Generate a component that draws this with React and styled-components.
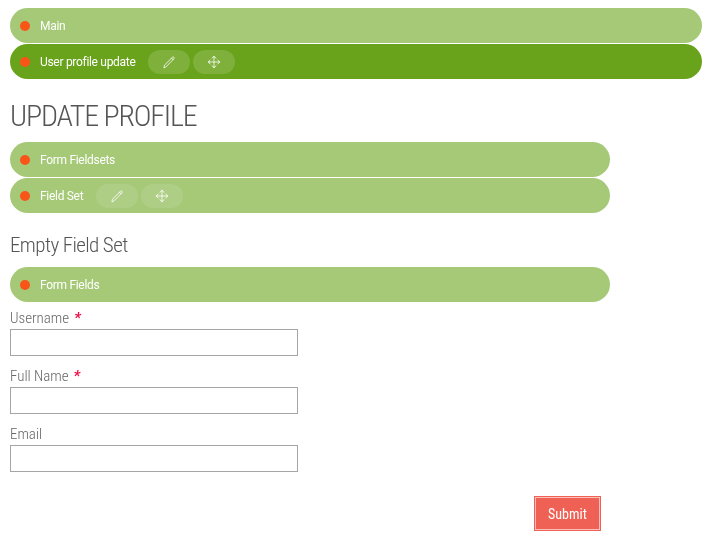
import React from "react";
import styled, { createGlobalStyle } from "styled-components";

const Global = createGlobalStyle`
  *, *::before, *::after { box-sizing: border-box; }
  body {
    margin: 0;
    background: #fff;
    color: #555;
    font-family: "Roboto Condensed", Roboto, sans-serif;
    font-stretch: 75%;
    font-weight: 300;
  }
`;

const Page = styled.main`
  width: 711px;
  height: 544px;
  padding: 8px 9px 0 10px;
  overflow: hidden;
  will-change: transform;
`;

const BarStack = styled.div`
  display: flex;
  flex-direction: column;
  gap: 1px;
`;

const EditBar = styled.div`
  display: flex;
  align-items: center;
  height: 35px;
  padding-left: 10px;
  border-radius: 17.5px;
  background: ${(p) => (p.$active ? "#69a31b" : "#a6c978")};
  color: #fff;
`;

const Dot = styled.span`
  width: 10px;
  height: 10px;
  margin: 1px 10px 0 0;
  border-radius: 50%;
  background: #fa5519;
`;

const BarLabel = styled.span`
  width: ${(p) => p.$width}px;
  font: 400 12px/16px Roboto, sans-serif;
  font-stretch: 100%;
  letter-spacing: -0.3px;
  white-space: nowrap;
`;

const Tools = styled.div`
  display: flex;
  gap: 3px;
  margin: 1px 0 0 13px;
`;

const ToolButton = styled.button`
  display: grid;
  place-items: center;
  width: 42px;
  height: 24px;
  padding: 0;
  border: 0;
  border-radius: 12px;
  background: rgba(255, 255, 255, ${(p) => (p.$active ? 0.14 : 0.1)});
  color: rgba(255, 255, 255, 0.9);
`;

const Icon = styled.svg`
  display: block;
  width: 14px;
  height: 14px;
  fill: none;
  stroke: currentColor;
  stroke-width: 0.9;
  stroke-linejoin: round;
  stroke-linecap: round;
`;

const Content = styled.form`
  width: 600px;
`;

const Title = styled.h1`
  margin: 17px 0 6px;
  height: 40px;
  font-size: 30px;
  line-height: 40px;
  font-weight: 300;
  letter-spacing: -1.2px;
  white-space: nowrap;
`;

const Subtitle = styled.h2`
  margin: 17px 0 7px;
  height: 30px;
  font-size: 21px;
  line-height: 30px;
  font-weight: 300;
  letter-spacing: -0.6px;
`;

const Field = styled.div`
  display: flex;
  flex-direction: column;
  width: 288px;
  height: 58px;
  padding-top: 6px;
`;

const Label = styled.label`
  height: 21px;
  color: #666;
  font-size: 15px;
  line-height: 20px;
  letter-spacing: -0.02px;
  white-space: nowrap;
`;

const Required = styled.span`
  margin-left: 5px;
  color: #f01048;
  font-weight: 700;
  font-style: italic;
  font-size: 15px;
  line-height: 1;
`;

const Input = styled.input`
  width: 288px;
  height: 27px;
  padding: 0 6px;
  border: 1px solid #a5a5a5;
  border-radius: 0;
  background: #fff;
  font: inherit;
`;

const Actions = styled.div`
  display: flex;
  justify-content: flex-end;
  padding: 20px 9px 0 0;
`;

const Submit = styled.button`
  width: 67px;
  height: 35px;
  padding: 1px;
  border: 0;
  background: #ef6154;
  color: #fff;
  font: inherit;
  font-stretch: 75%;
  font-weight: 400;
  font-size: 14px;
  letter-spacing: 0;

  span {
    display: grid;
    place-items: center;
    width: 100%;
    height: 100%;
    border: 1px solid #f9c0ba;
  }
`;

const Pencil = () => (
  <Icon viewBox="0 0 14 14">
    <path d="M2 12.600l.4-2.400L10.400 2.300q.8-.7 1.500 0t0 1.500L4 11.800zM9.500 3.200l1.500 1.500" />
  </Icon>
);

const Move = () => (
  <Icon viewBox="0 0 14 14">
    <path d="M7 1.300v11.400M1.300 7h11.400M5 3.200L7 1.300 9 3.200M5 10.800L7 12.700 9 10.800M3.200 5L1.300 7 3.200 9M10.800 5L12.700 7 10.800 9" />
  </Icon>
);

const Bar = ({ label, width, active, tools }) => (
  <EditBar $active={active}>
    <Dot />
    <BarLabel $width={width}>{label}</BarLabel>
    {tools && (
      <Tools>
        <ToolButton type="button" $active={active} aria-label="Edit"><Pencil /></ToolButton>
        <ToolButton type="button" $active={active} aria-label="Move"><Move /></ToolButton>
      </Tools>
    )}
  </EditBar>
);

const fields = [
  { id: "username", label: "Username", required: true },
  { id: "fullname", label: "Full Name", required: true },
  { id: "email", label: "Email" },
];

export default function App() {
  return (
    <Page>
      <Global />
      <BarStack>
        <Bar label="Main" width={26} />
        <Bar label="User profile update" width={95} active tools />
      </BarStack>
      <Content>
        <Title>UPDATE PROFILE</Title>
        <BarStack>
          <Bar label="Form Fieldsets" width={75} />
          <Bar label="Field Set" width={43} tools />
        </BarStack>
        <Subtitle>Empty Field Set</Subtitle>
        <Bar label="Form Fields" width={59} />
        {fields.map((f) => (
          <Field key={f.id}>
            <Label htmlFor={f.id}>
              {f.label}
              {f.required && <Required>*</Required>}
            </Label>
            <Input id={f.id} />
          </Field>
        ))}
        <Actions>
          <Submit type="button"><span>Submit</span></Submit>
        </Actions>
      </Content>
    </Page>
  );
}
